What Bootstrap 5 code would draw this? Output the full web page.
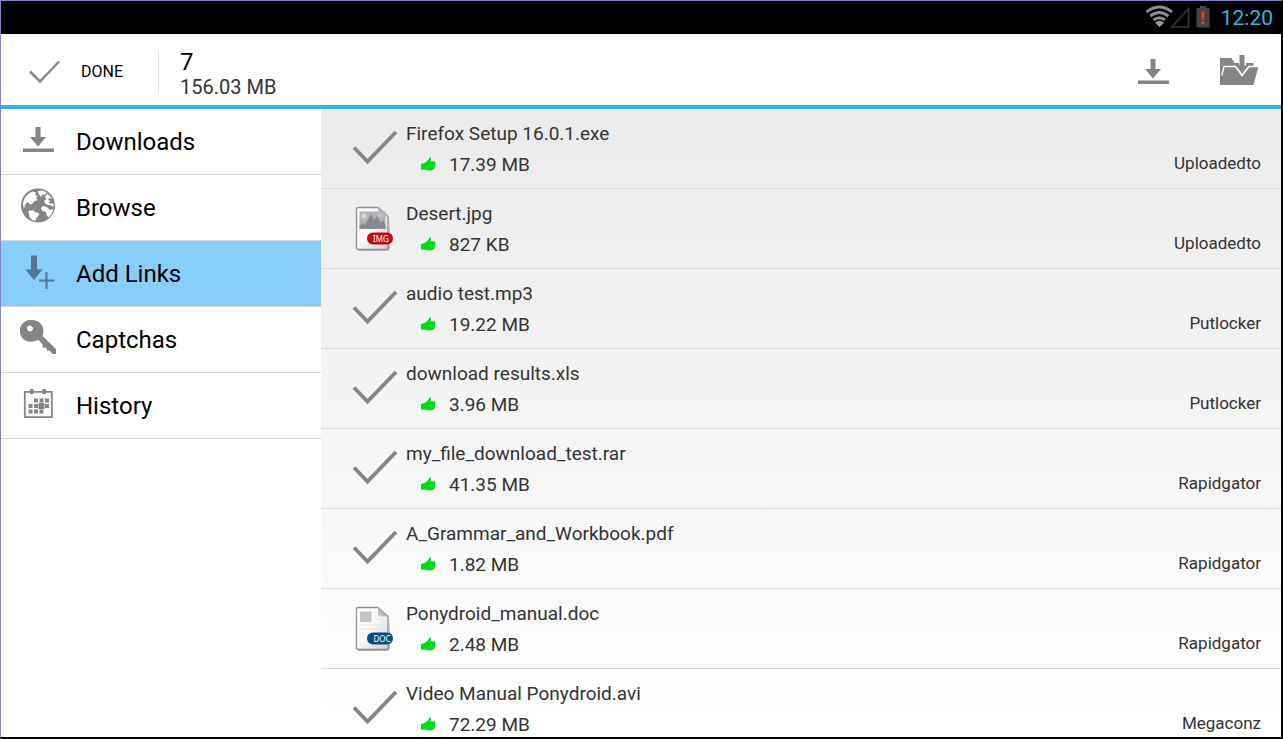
<!DOCTYPE html>
<html lang="en">
<head>
<meta charset="utf-8">
<meta name="viewport" content="width=device-width, initial-scale=1">
<title>Add Links</title>
<link href="https://cdn.jsdelivr.net/npm/bootstrap@5.3.0/dist/css/bootstrap.min.css" rel="stylesheet">
<style>
  body { font-family: Roboto, "Noto Sans", sans-serif; color: #000; background: #000; }
  .device { border: solid #000; border-width: 1px 2px 2px 1px; border-top-color: #8484d0; border-left-color: #8484d0; }
  .statusbar { height: 33px; background: #000; color: #33b5e5; font-size: 21px; line-height: 33px; padding: 2px 8px 0; }
  .actionbar { height: 75px; background: #fff; border-bottom: 4px solid #33b5e5; padding-top: 4px; }
  .done-btn { font-size: 16px; line-height: 24px; border: 0; background: none; padding: 0 35px 0 28px; }
  .summary { border-left: 1px solid #e2e2e2; height: 44px; padding-left: 21px; }
  .summary-count { font-size: 24px; line-height: 24px; }
  .summary-size { font-size: 20px; line-height: 26px; color: #333; }
  .tools { padding-right: 22px; }
  .tool-btn { border: 0; background: none; padding: 0; }
  .side { background: #fff; }
  .side a { height: 66px; padding: 0 19px; gap: 20px; font-size: 24px; color: #000; text-decoration: none; border-bottom: 1px solid #d8d8d8; }
  .side a svg { margin-bottom: 4px; }
  .side a.active { background: #87cefa; }
  .files { background: linear-gradient(#ebebeb, #fff); color: #333; }
  .file-row { height: 80px; flex: none; border-bottom: 1px solid #dadada; padding: 0 20px 0 30px; }
  .file-icon { width: 48px; height: 48px; margin: 0 7px 4px 0; }
  .file-name { font-size: 19px; line-height: 31px; }
  .file-size { font-size: 19px; line-height: 31px; padding-left: 14px; gap: 13px; }
  .file-host { font-size: 17px; line-height: 29px; padding-bottom: 2px; }
</style>
<script src="https://cdn.jsdelivr.net/npm/bootstrap@5.3.0/dist/js/bootstrap.bundle.min.js"></script>
</head>
<body>
<svg class="position-absolute" width="0" height="0" aria-hidden="true">
  <symbol id="check" viewBox="0 0 48 48"><path d="M3 24.500L16.500 38.500L45 9" fill="none" stroke="#858585" stroke-width="3.800"/></symbol>
  <symbol id="thumb" viewBox="0 0 16 16"><path d="M1 8.200L4.800 6.700C7.300 5.400 8.500 3.500 9.400 1.900C10.500 1 11.500 1.700 11 3.200L10.300 5.600L14 5.200C15.500 5.100 15.500 6.400 14.900 6.900C15.700 7.500 15.500 8.600 14.900 9C15.500 9.700 15.300 10.800 14.600 11.200C15 12 14.700 12.900 13.700 13.200C11 15 8 14.800 5 13.600L1 13.700Z" fill="#00dc14"/></symbol>
  <symbol id="download" viewBox="0 0 36 36"><path d="M15.500 5h5v10h5.500L18 24.500L10 15h5.500zM3 26.500h31v3.500H3z" fill="#858585"/></symbol>
  <symbol id="page" viewBox="0 0 48 48">
    <path d="M6.500 46Q7 48.200 9 48H37Q38.500 47.500 39 45V14L37 45Z" fill="#bbb"/>
    <path d="M5.500 6.500Q5.500 4.500 7.500 4.500H27L37 13.500V44.500Q37 46.500 35 46.500H7.500Q5.500 46.500 5.500 44.500Z" fill="url(#paper)" stroke="#8e8e8e" stroke-width="1.300"/>
  </symbol>
  <linearGradient id="paper" x1="0" y1="0" x2="1" y2="1"><stop offset="0" stop-color="#fff"/><stop offset=".5" stop-color="#f8f8f8"/><stop offset="1" stop-color="#cfd0d4"/></linearGradient>
  <linearGradient id="fold" x1="0" y1="1" x2="1" y2="0"><stop offset="0" stop-color="#d8d8da"/><stop offset="1" stop-color="#808084"/></linearGradient>
</svg>
<div class="device vh-100 d-flex flex-column overflow-hidden">
  <div class="statusbar d-flex align-items-center justify-content-end flex-shrink-0">
    <svg width="78" height="33" viewBox="0 0 78 33" aria-hidden="true">
      <g fill="none" stroke="#8d8d8d" stroke-width="3"><path d="M3.500 10Q16.500 0 29 10"/><path d="M7.300 14Q16.500 7 25.300 14" /><path d="M10.700 18Q16.500 13.500 22 18"/></g>
      <path d="M16.500 25L12 20.700Q16.500 17 21 20.700Z" fill="#999"/>
      <path d="M29 25L45.500 6.500V25Z" fill="none" stroke="#383838" stroke-width="1.600"/>
      <path d="M57 4h6v2h3.500v19.500h-13V6H57z" fill="#444"/><path d="M58.200 9.500h3.400l-.7 8.500h-2zM58.400 19.500h3v3h-3z" fill="#f43a10"/>
    </svg>
    <span>12:20</span>
  </div>
  <header class="actionbar d-flex align-items-center flex-shrink-0">
    <button type="button" class="done-btn d-flex align-items-center gap-3"><svg width="36" height="36" viewBox="0 0 36 36" aria-hidden="true"><path d="M1 17.500L11 27.500L30 7.500" fill="none" stroke="#888" stroke-width="2.500"/></svg>DONE</button>
    <div class="summary d-flex flex-column">
      <span class="summary-count">7</span>
      <span class="summary-size">156.03 MB</span>
    </div>
    <div class="ms-auto d-flex align-items-center tools">
      <button type="button" class="tool-btn me-5" aria-label="Download"><svg class="d-block" width="36" height="36"><use href="#download"/></svg></button>
      <button type="button" class="tool-btn" aria-label="Save to folder"><svg class="d-block" width="40" height="36" viewBox="0 0 40 36"><path d="M1 31V4H12.500L15.500 9H20V17L23 21L29 13H27V9H34.500V12H39.700L34.500 31Z" fill="#858585"/><path d="M2.800 21.500L5 12.500H16.500L23 21.500L30 12.500H40" fill="none" stroke="#fff" stroke-width="1.400"/><path d="M20.500 1h5v10.500h4L23 20L17.500 11.500h3z" fill="#858585"/></svg></button>
    </div>
  </header>
  <div class="row g-0 flex-grow-1 overflow-hidden">
    <nav class="side col-3">
      <a href="#" class="d-flex align-items-center"><svg width="36" height="36"><use href="#download"/></svg>Downloads</a>
      <a href="#" class="d-flex align-items-center"><svg width="36" height="36" viewBox="0 0 36 36"><circle cx="18" cy="17.500" r="17" fill="#858585"/><path fill="#fff" d="M9 5.500L12.500 3.500L16 4.500L15 7L17.500 8L16 10.500L18 12L14.500 13L12 16L9.500 16.500L8 14L5.500 16L4 20.500L3 17Q3 10 9 5.500ZM8.500 23L13 22L15.500 24.500L19 25L18.500 28L16 30.500L15.500 33Q11.500 32 9.500 29.500ZM18 3L23 2.500L26.500 4.500L25 6.500L22 6.500L21 9L18.500 6ZM27 5.500Q30.500 8 32 11L29.500 10L28 12L30.500 13L28.500 15L32 15.500L33.500 15.500V19L31 17.500L28 17L25 15.500L24 13L26.500 11L25 9ZM22.500 18L27 19L30 22L33.300 21Q32.500 26 28.500 29.500L26.500 27L26 24L22.500 23L21 20.500Z"/></svg>Browse</a>
      <a href="#" class="d-flex align-items-center active" aria-current="page"><svg width="36" height="36" viewBox="0 0 36 36" fill="#56758d"><path d="M11 1.500h6v14h5.500L14 26L5.500 15.500H11zM25.500 18h2v7.500h7v2h-7V35h-2v-7.500H19v-2h6.500z"/></svg>Add Links</a>
      <a href="#" class="d-flex align-items-center"><svg width="36" height="36" viewBox="0 0 36 36"><path fill="#858585" fill-rule="evenodd" d="M13 0A11 11 0 1 0 15.500 20.700L18.500 20L22.500 24.500L22.500 27.500H25.500L27 29L27 31L29.500 30.500L32.500 34H36V29L22.500 16L23 14A11 11 0 0 0 13 0ZM10 5.500A3 3 0 1 1 9.900 5.500Z"/></svg>Captchas</a>
      <a href="#" class="d-flex align-items-center"><svg width="36" height="36" viewBox="0 0 36 36"><path d="M4.800 5.800h27v25.400h-27z" fill="none" stroke="#858585" stroke-width="1.800"/><path d="M10 3h3.500v5H10zM22.500 3H26v5h-3.500zM14 12.500h4v4h-4zM19.500 12.500h4v4h-4zM25 12.500h4v4h-4zM8.500 18h4v4h-4zM14 18h4v4h-4zM18.500 17h6v6h-6zM25 18h4v4h-4zM8.500 23.500h4v4h-4zM14 23.500h4v4h-4zM19.500 23.500h4v4h-4z" fill="#858585"/></svg>History</a>
    </nav>
    <main class="files col-9 h-100 d-flex flex-column overflow-hidden">
      <div class="file-row d-flex align-items-center">
        <svg class="file-icon"><use href="#check"/></svg>
        <div class="flex-grow-1"><div class="file-name">Firefox Setup 16.0.1.exe</div><div class="file-size d-flex align-items-center"><svg width="16" height="16"><use href="#thumb"/></svg><span>17.39 MB</span><span class="file-host ms-auto">Uploadedto</span></div></div>
      </div>
      <div class="file-row d-flex align-items-center">
        <svg class="file-icon" viewBox="0 0 48 48"><use href="#page"/><path d="M8.500 8.500H34.500V26H8.500Z" fill="#b2b3b7"/><path d="M8.500 23L12 20L14 22L20 11L23 17L26 13L30 20L32 17L34.500 22V26H8.500Z" fill="#88898f"/><circle cx="13" cy="13" r="2.500" fill="#dcdcdf"/><path d="M27 4.500V12Q27 14 29 13.500H37Z" fill="url(#fold)"/><rect x="16" y="29.500" width="26" height="12" rx="6" fill="#c00a16"/><text x="30" y="39" text-anchor="middle" font-family="Noto Sans" font-size="8" fill="#fff">IMG</text></svg>
        <div class="flex-grow-1"><div class="file-name">Desert.jpg</div><div class="file-size d-flex align-items-center"><svg width="16" height="16"><use href="#thumb"/></svg><span>827 KB</span><span class="file-host ms-auto">Uploadedto</span></div></div>
      </div>
      <div class="file-row d-flex align-items-center">
        <svg class="file-icon"><use href="#check"/></svg>
        <div class="flex-grow-1"><div class="file-name">audio test.mp3</div><div class="file-size d-flex align-items-center"><svg width="16" height="16"><use href="#thumb"/></svg><span>19.22 MB</span><span class="file-host ms-auto">Putlocker</span></div></div>
      </div>
      <div class="file-row d-flex align-items-center">
        <svg class="file-icon"><use href="#check"/></svg>
        <div class="flex-grow-1"><div class="file-name">download results.xls</div><div class="file-size d-flex align-items-center"><svg width="16" height="16"><use href="#thumb"/></svg><span>3.96 MB</span><span class="file-host ms-auto">Putlocker</span></div></div>
      </div>
      <div class="file-row d-flex align-items-center">
        <svg class="file-icon"><use href="#check"/></svg>
        <div class="flex-grow-1"><div class="file-name">my_file_download_test.rar</div><div class="file-size d-flex align-items-center"><svg width="16" height="16"><use href="#thumb"/></svg><span>41.35 MB</span><span class="file-host ms-auto">Rapidgator</span></div></div>
      </div>
      <div class="file-row d-flex align-items-center">
        <svg class="file-icon"><use href="#check"/></svg>
        <div class="flex-grow-1"><div class="file-name">A_Grammar_and_Workbook.pdf</div><div class="file-size d-flex align-items-center"><svg width="16" height="16"><use href="#thumb"/></svg><span>1.82 MB</span><span class="file-host ms-auto">Rapidgator</span></div></div>
      </div>
      <div class="file-row d-flex align-items-center">
        <svg class="file-icon" viewBox="0 0 48 48"><use href="#page"/><path d="M9 8.500H20.500V19H9Z" fill="#c3c4c9"/><path d="M23 10H26M23 13H26M23 16H34M9 22H34M9 26H34" stroke="#e4e4e6" stroke-width="1"/><path d="M27 4.500V12Q27 14 29 13.500H37Z" fill="url(#fold)"/><rect x="16" y="29.500" width="26" height="12" rx="6" fill="#0a4a85"/><text x="31" y="39" text-anchor="middle" font-family="Noto Sans" font-size="8" fill="#fff">DOC</text></svg>
        <div class="flex-grow-1"><div class="file-name">Ponydroid_manual.doc</div><div class="file-size d-flex align-items-center"><svg width="16" height="16"><use href="#thumb"/></svg><span>2.48 MB</span><span class="file-host ms-auto">Rapidgator</span></div></div>
      </div>
      <div class="file-row d-flex align-items-center">
        <svg class="file-icon"><use href="#check"/></svg>
        <div class="flex-grow-1"><div class="file-name">Video Manual Ponydroid.avi</div><div class="file-size d-flex align-items-center"><svg width="16" height="16"><use href="#thumb"/></svg><span>72.29 MB</span><span class="file-host ms-auto">Megaconz</span></div></div>
      </div>
    </main>
  </div>
</div>
</body>
</html>
